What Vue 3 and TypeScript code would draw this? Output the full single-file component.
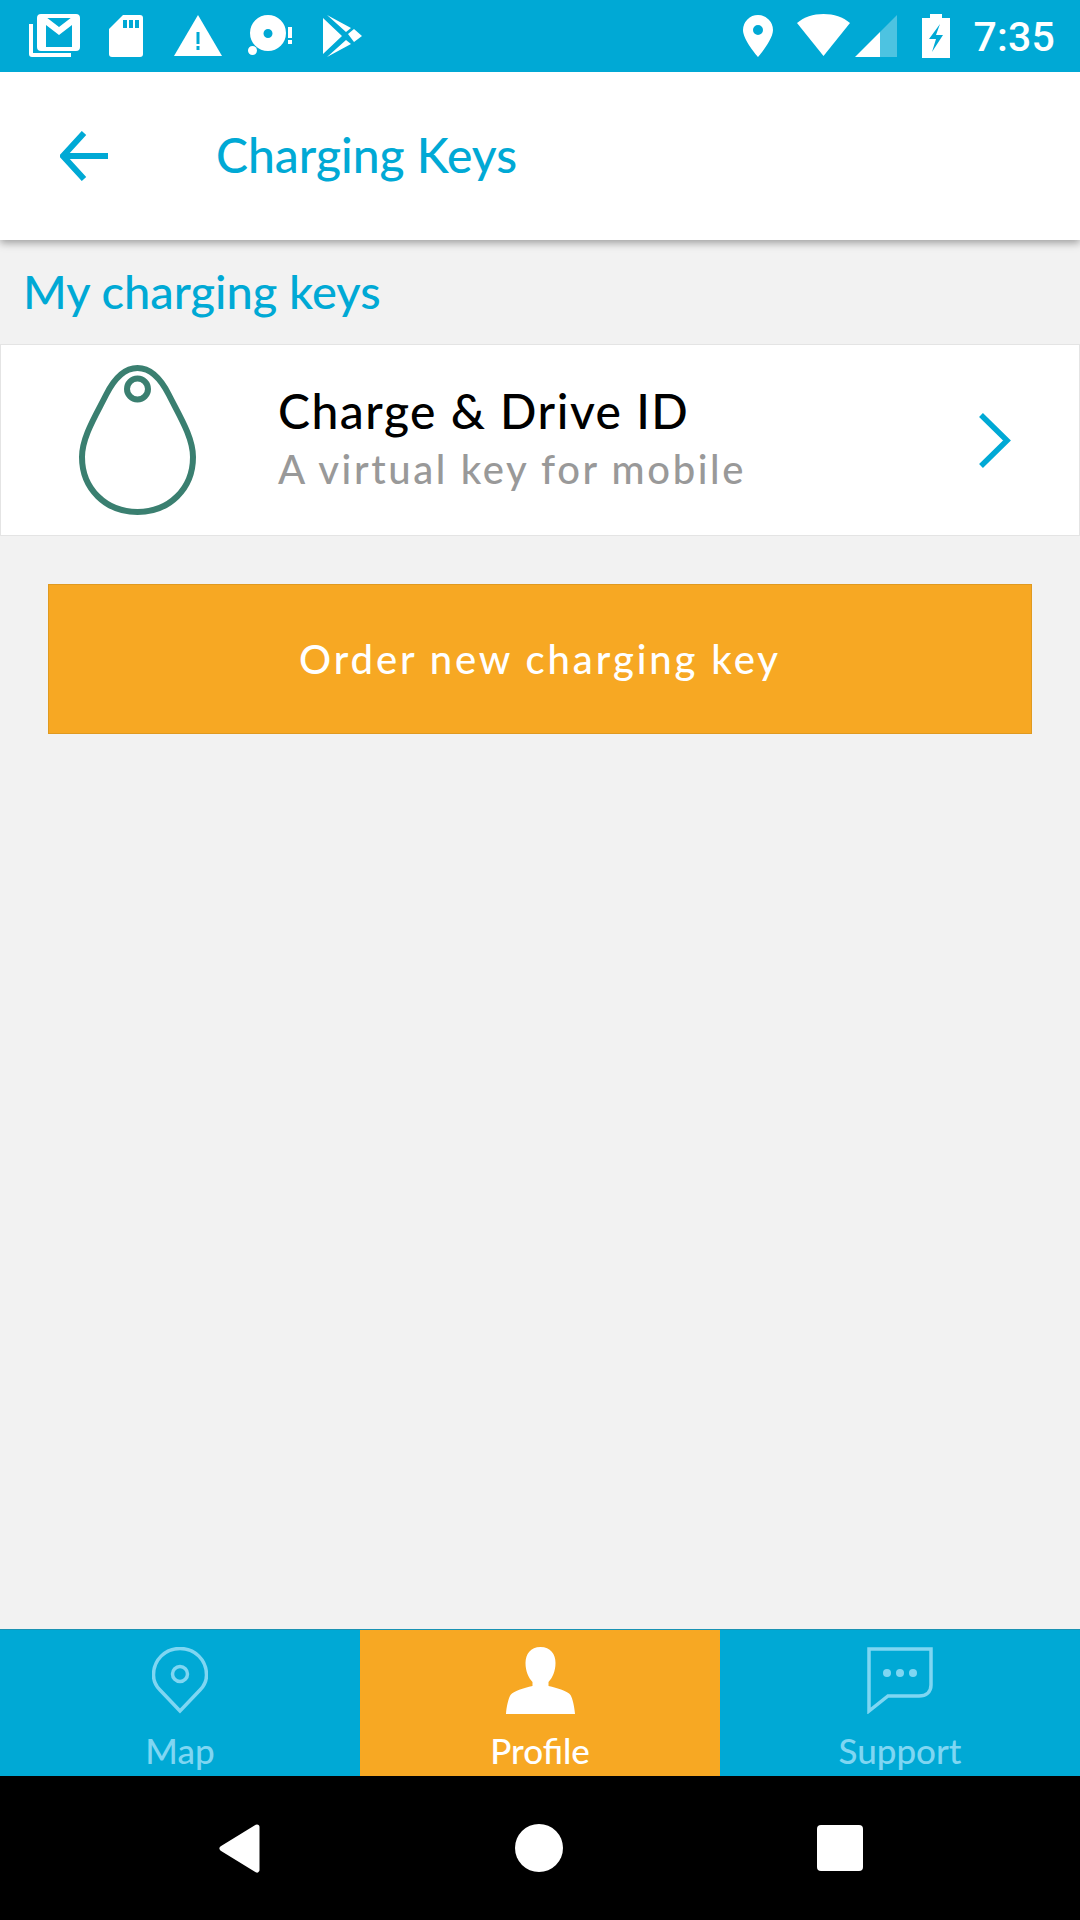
<script setup lang="ts">
const brand: string = 'Charge & Drive ID'
</script>

<template>
  <div class="screen">
    <div class="status">
      <div class="status-left">
        <svg class="i-mail" viewBox="0 0 51 43"><path d="M0 10h4v35h0v-6h38v4H3a3 3 0 0 1-3-3z" fill="#fff"/><rect x="10" y="2" width="39" height="33" rx="2" fill="none" stroke="#fff" stroke-width="4"/><path d="M12 3h5l13 10L43 3h5v30h-5V11L30 21 17 11v22h-5z" fill="#fff"/></svg>
        <svg class="i-sd" viewBox="0 0 34 42"><path d="M14 0h17a3 3 0 0 1 3 3v36a3 3 0 0 1-3 3H3a3 3 0 0 1-3-3V14z" fill="#fff"/><path d="M14 5h4v8h-4zM20 5h4v8h-4zM26 5h4v8h-4z" fill="#00a9d5"/></svg>
        <svg class="i-warn" viewBox="0 0 48 41"><path d="M24 0l24 41H0z" fill="#fff"/><path d="M22.500 17h3v12h-3zM22.500 31h3v4h-3z" fill="#00a9d5"/></svg>
        <svg class="i-disc" viewBox="0 0 44 40"><path fill-rule="evenodd" d="M20 0a18 18 0 1 1 0 36 18 18 0 0 1 0-36zm0 14a4.500 4.500 0 1 0 0 9 4.500 4.500 0 0 0 0-9z" fill="#fff"/><circle cx="4.500" cy="35.500" r="4.500" fill="#fff"/><path d="M40 12h4v11h-4zM40 25h4v4h-4z" fill="#fff"/></svg>
        <svg class="i-play" viewBox="0 0 39 42"><path d="M0 3l19 18L0 39zM4 0l19 17 5-4zM4 42l19-17 5 4zM25 19l6-5 8 7-8 6z" fill="#fff"/></svg>
      </div>
      <div class="status-right">
        <svg class="i-loc" viewBox="0 0 30 42"><path fill-rule="evenodd" d="M15 0a15 15 0 0 1 15 15c0 10-15 27-15 27S0 25 0 15A15 15 0 0 1 15 0zm0 10a5 5 0 1 0 0 10 5 5 0 0 0 0-10z" fill="#fff"/></svg>
        <svg class="i-wifi" viewBox="0 0 53 42"><path d="M0 9C7 3 16 0 26.500 0S46 3 53 9L26.500 42z" fill="#fff"/></svg>
        <svg class="i-sig" viewBox="0 0 42 42"><path d="M42 0v42H25V17z" fill="#fff" opacity=".3"/><path d="M25 17v25H0z" fill="#fff"/></svg>
        <svg class="i-bat" viewBox="0 0 28 44"><path d="M8 0h12v4h8v40H0V4h8z" fill="#fff"/><path d="M18 10L7 25h7l-4 13 11-17h-7z" fill="#00a9d5"/></svg>
        <span class="time">7:35</span>
      </div>
    </div>

    <header class="bar">
      <svg class="i-back" viewBox="0 0 48 50"><path d="M24 2L3 25l21 23M3 25h45" fill="none" stroke="#00a9d5" stroke-width="6"/></svg>
      <h1 class="bar-title">Charging Keys</h1>
    </header>

    <main class="content">
      <h2 class="section">My charging keys</h2>
      <div class="card">
        <svg class="i-key" viewBox="0 0 117 150"><path d="M58.500 3C72 3 82 14 90 30c10 20 24 42 24 62 0 32-24 55-55.500 55S3 124 3 92c0-20 14-42 24-62C35 14 45 3 58.500 3z" fill="none" stroke="#3a7f70" stroke-width="6"/><circle cx="58.500" cy="24" r="10.500" fill="none" stroke="#3a7f70" stroke-width="6"/></svg>
        <div class="card-text">
          <div class="card-title">{{ brand }}</div>
          <div class="card-sub">A virtual key for mobile</div>
        </div>
        <svg class="i-chev" viewBox="0 0 32 55"><path d="M2 2l26 25.500L2 53" fill="none" stroke="#00a9d5" stroke-width="5.500"/></svg>
      </div>
      <div class="button">Order new charging key</div>
    </main>

    <nav class="tabs">
      <div class="tab">
        <svg class="tab-icon" viewBox="0 0 56 67"><path d="M28 64L8 43C3 38 1.500 33 1.500 28 1.500 13 13 1.500 28 1.500S54.500 13 54.500 28c0 5-1.500 10-6.500 15z" fill="none" stroke="#7fd6f2" stroke-width="3.500"/><circle cx="28" cy="27" r="7.500" fill="none" stroke="#7fd6f2" stroke-width="3.500"/></svg>
        <span class="tab-label">Map</span>
      </div>
      <div class="tab active">
        <svg class="tab-icon" viewBox="0 0 69 67"><path d="M34.500 0c10 0 15 7 15 16 0 8-3 15-7 19v4c9 2 19 5 22 9 2 3 4 12 4.500 19H0c.5-7 2.500-16 4.500-19 3-4 13-7 22-9v-4c-4-4-7-11-7-19 0-9 5-16 15-16z" fill="#fff"/></svg>
        <span class="tab-label">Profile</span>
      </div>
      <div class="tab">
        <svg class="tab-icon" viewBox="0 0 66 67"><path d="M2 2h62v36c0 7-5 11-12 11H21L2 64z" fill="none" stroke="#7fd6f2" stroke-width="3.500"/><circle cx="20" cy="26" r="4" fill="#7fd6f2"/><circle cx="33" cy="26" r="4" fill="#7fd6f2"/><circle cx="46" cy="26" r="4" fill="#7fd6f2"/></svg>
        <span class="tab-label">Support</span>
      </div>
    </nav>

    <div class="sysnav">
      <svg class="i-nav-back" viewBox="0 0 42 49"><path d="M38 3L3 24.500 38 46z" fill="#fff" stroke="#fff" stroke-width="5" stroke-linejoin="round"/></svg>
      <div class="nav-home"></div>
      <div class="nav-recent"></div>
    </div>
  </div>
</template>

<style>
html, body { margin: 0; background: #f2f2f2; }
</style>

<style scoped>
.screen {
  width: 1080px;
  height: 1920px;
  display: flex;
  flex-direction: column;
  background: #f2f2f2;
  font-family: "Lato", "Liberation Sans", sans-serif;
  overflow: hidden;
}
.status {
  height: 72px;
  flex: none;
  background: #00a9d5;
  display: flex;
  justify-content: space-between;
  align-items: flex-start;
  position: relative;
  z-index: 3;
}
.status svg { display: block; flex: none; }
.status-left { display: flex; align-items: flex-start; padding: 15px 0 0 29px; }
.i-mail { width: 51px; height: 43px; margin-top: -1px; }
.i-sd { width: 34px; height: 42px; margin-left: 29px; }
.i-warn { width: 48px; height: 41px; margin-left: 31px; }
.i-disc { width: 44px; height: 40px; margin-left: 26px; }
.i-play { width: 39px; height: 42px; margin-left: 31px; }
.status-right { display: flex; align-items: flex-start; padding: 15px 25px 0 0; }
.i-loc { width: 30px; height: 42px; }
.i-wifi { width: 55px; height: 42px; margin-left: 23px; margin-top: -1px; }
.i-sig { width: 42px; height: 42px; margin-left: 4px; }
.i-bat { width: 28px; height: 44px; margin-left: 25px; margin-top: -1px; }
.time {
  font-family: "Roboto", sans-serif;
  font-size: 41px;
  font-weight: 500;
  line-height: 44px;
  color: #fff;
  margin-left: 23px;
  letter-spacing: 0.2px;
}
.bar {
  height: 168px;
  flex: none;
  background: #fff;
  display: flex;
  align-items: center;
  padding-left: 60px;
  box-shadow: 0 3px 8px rgba(0, 0, 0, 0.35);
  position: relative;
  z-index: 2;
}
.i-back { width: 48px; height: 50px; flex: none; }
.bar-title {
  margin: 0 0 4px 108px;
  font-size: 48px;
  font-weight: 500;
  color: #00a9d5;
}
.content { flex: 1; display: flex; flex-direction: column; }
.section {
  margin: 0;
  padding: 23px 0 0 23px;
  height: 83px;
  box-sizing: border-box;
  font-size: 47px;
  line-height: 56px;
  font-weight: 500;
  color: #00a9d5;
}
.card {
  margin-top: 21px;
  height: 192px;
  box-sizing: border-box;
  background: #fff;
  border: 1px solid #e4e4e4;
  display: flex;
  align-items: center;
  padding: 0 68px 0 78px;
}
.i-key { width: 117px; height: 150px; flex: none; }
.card-text { flex: 1; margin-left: 82px; padding-bottom: 2px; }
.card-title {
  font-size: 48px;
  line-height: 58px;
  margin-top: -1px;
  color: #000;
  font-weight: 500;
  letter-spacing: 1.5px;
}
.card-sub {
  font-size: 40px;
  line-height: 52px;
  margin-top: 3px;
  color: #999;
  font-weight: 500;
  letter-spacing: 2.600px;
}
.i-chev { width: 32px; height: 55px; flex: none; }
.button {
  margin: 48px 48px 0;
  height: 150px;
  box-sizing: border-box;
  background: #f7a823;
  border: 1px solid #e09a20;
  color: #fff;
  font-size: 40px;
  font-weight: 500;
  letter-spacing: 2.900px;
  display: flex;
  align-items: center;
  justify-content: center;
}
.tabs {
  height: 147px;
  flex: none;
  display: flex;
  background: #00a9d5;
  box-shadow: inset 0 1px 0 #1a93b3;
}
.tab {
  flex: 1;
  display: flex;
  flex-direction: column;
  align-items: center;
  padding-top: 18px;
  box-sizing: border-box;
  color: #7fd6f2;
}
.tab.active { background: #f7a823; color: #fff; margin-top: 1px; padding-top: 17px; }
.tab-icon { height: 67px; width: auto; display: block; }
.tab-label { font-size: 35px; line-height: 40px; margin-top: 16px; font-weight: 500; }
.tab.active .tab-label { font-size: 35px; font-weight: 500; }
.sysnav {
  height: 144px;
  flex: none;
  background: #000;
  display: flex;
  align-items: center;
  padding: 0 217px 0 219px;
  justify-content: space-between;
}
.i-nav-back { width: 42px; height: 49px; display: block; }
.nav-home { width: 48px; height: 48px; border-radius: 50%; background: #fff; }
.nav-recent { width: 46px; height: 46px; border-radius: 4px; background: #fff; }
</style>
